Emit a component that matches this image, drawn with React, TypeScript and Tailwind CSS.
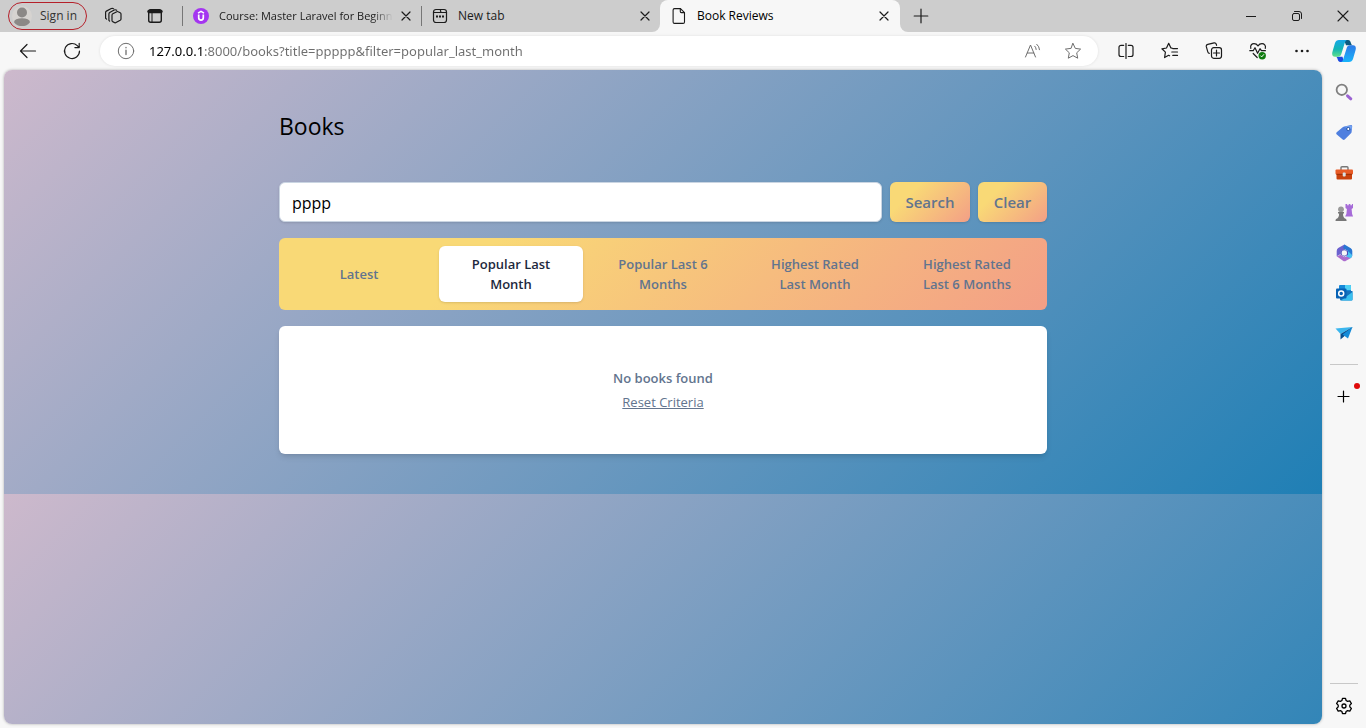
import type { ReactNode } from "react";

const filters = ["Latest", "Popular Last Month", "Popular Last 6 Months", "Highest Rated Last Month", "Highest Rated Last 6 Months"];

function Icon({ size = 18, sw = 1, className = "", children }: { size?: number; sw?: number; className?: string; children: ReactNode }) {
  return (
    <svg width={size} height={size} viewBox={`0 0 ${size} ${size}`} fill="none" stroke="currentColor" strokeWidth={sw} strokeLinecap="round" strokeLinejoin="round" className={`shrink-0 ${className}`} aria-hidden="true">
      {children}
    </svg>
  );
}

function IconButton({ label, className = "", children }: { label: string; className?: string; children: ReactNode }) {
  return (
    <button type="button" aria-label={label} className={`flex shrink-0 items-center justify-center ${className}`}>
      {children}
    </button>
  );
}

function CloseIcon() {
  return (
    <Icon size={10} sw={1.2}>
      <path d="M1 1l8 8M9 1L1 9" />
    </Icon>
  );
}

function TabStrip() {
  return (
    <header className="flex h-8 shrink-0 bg-[#f7f7f7] text-xs text-[#1b1b1b]">
      <div className="flex w-[660px] shrink-0 items-center rounded-br-lg bg-[#cdcdcd]">
        <button type="button" className="ml-2 flex h-7 w-[79px] items-center gap-2 rounded-full border border-[#b5202a] pl-[3px] text-[#333]">
          <svg width="20" height="20" viewBox="0 0 20 20" className="shrink-0" aria-hidden="true">
            <circle cx="10" cy="10" r="10" fill="#d6d3d0" />
            <circle cx="10" cy="6.500" r="5" fill="#8b8886" />
            <path d="M2 16.200a8 4 0 0 1 16 0A10 10 0 0 1 2 16.200z" fill="#8b8886" />
          </svg>
          <span className="whitespace-nowrap">Sign in</span>
        </button>
        <IconButton label="Workspaces" className="ml-[17px] w-[18px]">
          <Icon sw={1.200}>
            <path d="M8 8.200q0-1 .8-1.400l4-2.100q.7-.4 1.400 0l2 1q.8.4.8 1.200v5q0 .8-.8 1.300L12 15.600q-.6.400-1.200.1L8.700 14.600Q8 14.200 8 13.400z" />
            <path d="M5.600 14l-.7-.6V7q0-1 .8-1.500L10.200 3q.9-.5 1.900 0l.6.300" />
            <path d="M2.600 12.100l-1-.8V5.600q0-1 .8-1.500L7.300 1.500q.9-.4 1.800 0l.5.2" />
          </Icon>
        </IconButton>
        <IconButton label="Tab actions" className="ml-6 w-[18px]">
          <Icon sw={1.400}>
            <rect x="2.700" y="2.700" width="12.600" height="12.600" rx="2" />
            <path d="M3 4.500h12" strokeWidth="3.400" />
            <path d="M6 6v9" strokeWidth="1" />
          </Icon>
        </IconButton>
        <div className="ml-[18px] flex h-5 w-[239px] items-center border-l border-[#767676] pl-[10px]">
          <svg width="16" height="16" viewBox="0 0 16 16" className="shrink-0" aria-hidden="true">
            <circle cx="8" cy="8" r="8" fill="#a435f0" />
            <path d="M5 5.200L8 3.400l3 1.800" fill="none" stroke="#fff" strokeWidth="1.500" />
            <path d="M5.700 6.600v3.200a2.300 2.300 0 0 0 4.600 0V6.600" fill="none" stroke="#fff" strokeWidth="1.700" />
          </svg>
          <span className="ml-[10px] w-[174px] overflow-hidden text-[11px] leading-4 whitespace-nowrap [mask-image:linear-gradient(to_right,black_88%,transparent)]">Course: Master Laravel for Beginn</span>
          <IconButton label="Close tab" className="ml-[5px] w-4"><CloseIcon /></IconButton>
        </div>
        <div className="flex h-5 flex-1 items-center border-l border-[#767676] pl-[10px]">
          <Icon size={16} sw={1.200}>
            <rect x="1.500" y="1.500" width="13" height="13" rx="2.500" />
            <path d="M1.500 4.500h6.500l1-.0h5.500M8.500 1.500v1.500q0 1.500 1.500 1.500" />
            <path d="M4 8.500h2M7 8.500h2M10 8.500h2" strokeWidth="2" strokeLinecap="butt" />
          </Icon>
          <span className="ml-[10px] flex-1">New tab</span>
          <IconButton label="Close tab" className="mr-[7px] w-4"><CloseIcon /></IconButton>
        </div>
      </div>
      <div className="w-60 shrink-0 bg-[#cdcdcd]">
        <div className="flex h-full items-center rounded-t-lg bg-[#f7f7f7] pl-[11px]">
          <Icon size={16} sw={1.100}>
            <path d="M3.500.6H9.500L13.500 4.600V14a1.400 1.400 0 0 1-1.400 1.400H3.500A1.400 1.400 0 0 1 2.100 14V2A1.400 1.400 0 0 1 3.500.6z" />
            <path d="M9.300.8v2.800a1 1 0 0 0 1 1h3" />
          </Icon>
          <span className="ml-[10px] flex-1 text-black">Book Reviews</span>
          <IconButton label="Close tab" className="mr-2 w-4"><CloseIcon /></IconButton>
        </div>
      </div>
      <div className="flex flex-1 items-center rounded-bl-lg bg-[#cdcdcd]">
        <IconButton label="New tab" className="ml-[13px] w-4">
          <Icon size={16} sw={1.200}><path d="M8 1.200v13.600M1.200 8h13.600" /></Icon>
        </IconButton>
        <div className="flex-1" />
        <IconButton label="Minimise" className="h-8 w-[46px]">
          <Icon size={12}><path d="M1 6.500h10" strokeLinecap="butt" /></Icon>
        </IconButton>
        <IconButton label="Restore" className="h-8 w-[46px]">
          <Icon size={12}>
            <rect x="1.500" y="3.500" width="7" height="7" rx="1.500" />
            <path d="M3.500 1.500h4.500a2.500 2.500 0 0 1 2.500 2.500v4.500" />
          </Icon>
        </IconButton>
        <IconButton label="Close window" className="h-8 w-[46px]">
          <Icon size={12} sw={1.100}><path d="M1 1l10 10M11 1L1 11" /></Icon>
        </IconButton>
      </div>
    </header>
  );
}

function Toolbar() {
  return (
    <nav className="flex h-[38px] shrink-0 items-center pl-[18px] text-[#1b1b1b]">
      <IconButton label="Back" className="w-5">
        <Icon size={20} sw={1.200}><path d="M17.500 10h-15M9 3.500L2.500 10 9 16.500" /></Icon>
      </IconButton>
      <IconButton label="Refresh" className="ml-6 w-5">
        <Icon size={20} sw={1.200}><path d="M17.500 10a7.500 7.500 0 1 1-2.200-5.300L17 6.400M17.200 2.300v4.300h-4.300" /></Icon>
      </IconButton>
      <div className="ml-[18px] flex h-[30px] flex-1 items-center rounded-full bg-white pl-[17px] shadow-[0_0_3px_rgba(0,0,0,0.1)]">
        <Icon className="text-[#6e6e6e]">
          <circle cx="9" cy="9" r="7.700" />
          <path d="M9 8.200v4.300M9 5.500v.3" strokeWidth="1.300" />
        </Icon>
        <input
          aria-label="Address"
          defaultValue="127.0.0.1:8000/books?title=ppppp&filter=popular_last_month"
          className="ml-[14px] h-5 min-w-0 flex-1 bg-linear-to-r from-black from-[54px] to-[#6e6e6e] to-[54px] bg-clip-text font-['Noto_Sans',sans-serif] text-[13px] text-transparent caret-black outline-none"
        />
        <IconButton label="Read aloud" className="text-[#6e6e6e]">
          <Icon>
            <path d="M1.500 15L6.500 3l5 12M3.300 11h6.500" />
            <path d="M10.800 4.200a5 5 0 0 1 1.400 3.300M12.800 2.300a7.500 7.500 0 0 1 2.700 5.400" />
          </Icon>
        </IconButton>
        <IconButton label="Favourite" className="mr-4 ml-[22px] text-[#6e6e6e]">
          <Icon><path d="M9 1.500l2.300 4.900 5.300.7-3.900 3.700 1 5.400L9 13.600l-4.700 2.600 1-5.400L1.400 7.100l5.300-.7z" /></Icon>
        </IconButton>
      </div>
      <div className="ml-[19px] flex w-[205px] shrink-0 items-center gap-[26px]">
        <IconButton label="Split screen">
          <Icon sw={1.200}>
            <path d="M9 1.500v15" />
            <path d="M6.700 3.300H4a2 2 0 0 0-2 2v7.200a2 2 0 0 0 2 2h2.700M11.300 3.300H14a2 2 0 0 1 2 2v7.200a2 2 0 0 1-2 2h-2.700" />
          </Icon>
        </IconButton>
        <IconButton label="Favourites">
          <Icon sw={1.200}>
            <path d="M11 6.100l-1.100-.2L7.700 1.300 5.500 6l-4.600.8 3.500 3.300-.8 5.500 4-2.300 1 .5M11.800 6.600h4.700M10.800 10h5.700M11.800 13.400h4.700" />
          </Icon>
        </IconButton>
        <IconButton label="Collections">
          <Icon sw={1.200}>
            <rect x="6.500" y="5.700" width="10" height="10.600" rx="2.200" />
            <path d="M11.500 8v6M8.500 11h6M4.300 11.300a2 2 0 0 1-1.500-1.500L1.300 4.700a2 2 0 0 1 1.500-2.300l6.300-1.500a2 2 0 0 1 2.200 1.300l.3 1.100" />
          </Icon>
        </IconButton>
        <IconButton label="Browser essentials">
          <Icon sw={1.200}>
            <path d="M1.800 6.300C1 3 3 1.700 5 1.700c2 0 3.300 1.200 4 2.200.7-1 2-2.200 4-2.200s4.200 1.500 3.300 4.600M.8 8.700h3.400l1.800-3 2.600 5.600L11 6.700l1.400 2h4M4.200 11.500l4 4" />
            <circle cx="13.200" cy="13.700" r="3.700" fill="#107c10" stroke="none" />
            <path d="M11.700 13.900l1 1 2-2.300" stroke="#fff" strokeWidth="1" />
          </Icon>
        </IconButton>
        <IconButton label="More">
          <Icon>
            <g fill="currentColor" stroke="none"><circle cx="3.500" cy="9" r="1.300" /><circle cx="9" cy="9" r="1.300" /><circle cx="14.500" cy="9" r="1.300" /></g>
          </Icon>
        </IconButton>
      </div>
    </nav>
  );
}

function Sidebar() {
  return (
    <aside className="flex w-11 shrink-0 flex-col items-center">
      <IconButton label="Copilot" className="h-[38px]">
        <svg width="24" height="24" viewBox="0 0 24 24" aria-hidden="true">
          <defs>
            <linearGradient id="cpA" x1="0" y1="0" x2="0" y2="1"><stop offset="0" stopColor="#16a7e8" /><stop offset=".55" stopColor="#12b5b5" /><stop offset="1" stopColor="#5fe08a" /></linearGradient>
            <linearGradient id="cpB" x1="0" y1="0" x2="0" y2="1"><stop offset="0" stopColor="#2d7be8" /><stop offset="1" stopColor="#18b4fa" /></linearGradient>
          </defs>
          <path d="M12 1h4c2 0 2.500 1.500 3 3.200.4 1.300.8 2 2 2h-7z" fill="#0a5a80" />
          <path d="M12 23H8.500c-2 0-2.500-1.500-3-3.200-.4-1.300-.8-2-2-2h7z" fill="#1b4ae0" />
          <path d="M7 1h8c-1.500.5-2 2-2.500 3.800L9.300 15c-.6 1.800-1.600 2.700-3.300 2.700H3C.5 17.700-.3 15.500.4 13L3 4C3.700 2 5 1 7 1z" fill="url(#cpA)" />
          <path d="M17 23H9c1.500-.5 2-2 2.500-3.800L14.700 9c.6-1.800 1.600-2.700 3.300-2.700h3c2.500 0 3.300 2.200 2.600 4.700L21 20c-.7 2-2 3-4 3z" fill="url(#cpB)" />
        </svg>
      </IconButton>
      <div className="flex flex-col items-center gap-5 pt-[13px]">
        <IconButton label="Search sidebar" className="h-5">
          <svg width="20" height="20" viewBox="0 0 20 20" aria-hidden="true">
            <path d="M13.500 12.800l3.300 3" stroke="#9b63d2" strokeWidth="3" strokeLinecap="round" />
            <circle cx="7.800" cy="6.800" r="5.200" fill="none" stroke="#808080" strokeWidth="1.800" />
          </svg>
        </IconButton>
        <IconButton label="Shopping" className="h-5">
          <svg width="20" height="20" viewBox="0 0 20 20" aria-hidden="true">
            <path d="M10.500 3.500L17 2q1.300 0 1.200 1.200L17.600 9q-.1.700-.6 1.200l-6.300 6.400q-1 .9-2 0L2.500 11.300q-.8-1 .2-2l6-5q.8-.7 1.800-.8z" fill="#4f7fdf" />
            <path d="M10 3.700L17 2.500q1 .1.900 1l-.2 3z" fill="#75a3f1" />
            <circle cx="14.300" cy="6" r="1.600" fill="#fff" stroke="#2454a7" />
          </svg>
        </IconButton>
        <IconButton label="Tools" className="h-5">
          <svg width="20" height="20" viewBox="0 0 20 20" aria-hidden="true">
            <path d="M7 7V4.700q0-1 1-1h5q1 0 1 1V7" fill="none" stroke="#777" strokeWidth="1.400" />
            <rect x="1.500" y="6.500" width="17.500" height="5" rx="1" fill="#e85b26" />
            <path d="M2.500 11h15.500v4.500q0 1-1 1H3.500q-1 0-1-1z" fill="#c9410d" />
            <path d="M2.500 11.300h15.500" stroke="#9c2f07" />
            <rect x="8.700" y="9.500" width="3" height="4" rx="1" fill="#d8e1e5" />
          </svg>
        </IconButton>
        <IconButton label="Games" className="h-5">
          <svg width="20" height="20" viewBox="0 0 20 20" aria-hidden="true">
            <path d="M11.500 1h1.700v1.300h1.500V1h1.700v1.300h1.500V1H19v4l-1.400 1 .5 5 1 2.500h-8l1.300-2.500.5-5-1.400-1z" fill="#a66bd8" />
            <circle cx="7" cy="6.300" r="2.900" fill="#999" />
            <path d="M4 9h6v1.500H9c0 3 .7 4.500 3 5.500q.6.500.6 2H1.500q0-1.500.6-2c2.300-1 3-2.500 3-5.500H4z" fill="#777" />
          </svg>
        </IconButton>
        <IconButton label="Microsoft 365" className="h-5">
          <svg width="20" height="20" viewBox="0 0 20 20" aria-hidden="true">
            <path d="M10.500 1.500L4.200 5Q2.700 6 2.700 8v5.200l4-2.200V8.500l6-3.300z" fill="#6c62cf" />
            <path d="M10.500 1.500l6.300 3.700q1.500 1 1.500 2.800v4.500l-4.500-2.300V8L9 5z" fill="#2876d3" />
            <path d="M2.700 13.200L9 17.700q1.500 1 3 0l4.500-2.500q1.800-1 1.800-2.800l-4.500-2.200v2.500l-3.300 1.600-3.800-2.500z" fill="#ac6bce" />
            <path d="M12.500 13.500l1.300-5.500 4.500 4.200q0 2-1.800 3z" fill="#49c4f2" />
            <path d="M6.500 8.500l4-2.200 3.500 2v3.500l-3.500 2-4-2.300z" fill="#4a4bb8" />
            <circle cx="10.300" cy="10" r="2.700" fill="#f7f7f7" />
          </svg>
        </IconButton>
        <IconButton label="Outlook" className="h-5">
          <svg width="20" height="20" viewBox="0 0 20 20" aria-hidden="true">
            <rect x="5" y="2" width="12" height="13" rx="1" fill="#1689d8" />
            <path d="M11 2h5q1 0 1 1v4h-6z" fill="#50d2f5" />
            <path d="M6 8h12.500v8.500q0 1-1 1H7q-1 0-1-1z" fill="#1472bd" />
            <path d="M18.500 9v7.500q0 1-1 1H7z" fill="#39c0ef" />
            <rect x="2" y="5.500" width="10.500" height="10" rx="1" fill="#0762b5" />
            <circle cx="7.200" cy="10.500" r="2.500" fill="none" stroke="#fff" strokeWidth="1.500" />
          </svg>
        </IconButton>
        <IconButton label="Drop" className="h-5">
          <svg width="20" height="20" viewBox="0 0 20 20" aria-hidden="true">
            <path d="M1.500 5.500L18.500 4 6.500 11z" fill="#3bb6ee" />
            <path d="M18.500 4L6.500 11v5.500l3.500-3z" fill="#0a4e8c" />
            <path d="M18.500 4L8.500 11.500l5.500 4z" fill="#148bd8" />
          </svg>
        </IconButton>
      </div>
      <div className="mt-[21px] h-px w-7 bg-[#c8c8c8]" />
      <div className="relative mt-[22px]">
        <IconButton label="Customise" className="h-5">
          <Icon size={20} sw={1.200}><path d="M9.500 4v11M4 9.500h11" /></Icon>
        </IconButton>
        <span className="absolute -top-1 left-5 size-[6px] rounded-full bg-[#e00b0b]" />
      </div>
      <div className="mt-auto h-px w-7 bg-[#c8c8c8]" />
      <IconButton label="Settings" className="h-11">
        <Icon size={18} sw={1.300}>
          <path d="M7.500 1.300h3l.6 2.200 1.500.9 2.200-.6 1.600 2.700-1.600 1.600v1.800l1.600 1.600-1.600 2.700-2.200-.6-1.500.9-.6 2.200h-3l-.6-2.200-1.500-.9-2.200.6-1.600-2.700L3.200 9.900V8.100L1.600 6.500l1.600-2.700 2.200.6 1.500-.9z" />
          <circle cx="9" cy="9" r="2" />
        </Icon>
      </IconButton>
    </aside>
  );
}

function BooksPage() {
  return (
    <main className="mb-1 ml-1 flex-1 overflow-hidden rounded-lg bg-[linear-gradient(315deg,#1f7fb5_0%,#cdb9cc_100%)] bg-[length:100%_424px] bg-repeat-y shadow-[0_0_3px_rgba(0,0,0,0.3)]">
      <div className="mx-auto max-w-3xl py-10">
        <h1 className="mb-10 text-[23px] leading-8 text-black">Books</h1>
        <form className="mb-4 flex gap-2" onSubmit={(e) => e.preventDefault()}>
          <input aria-label="Search by title" defaultValue="pppp" className="h-10 min-w-0 flex-1 rounded-md border border-slate-300 bg-white px-3 pt-0.5 text-base text-black shadow-sm outline-none" />
          <button type="submit" className="h-10 w-20 rounded-md bg-[linear-gradient(315deg,#f39f86_0%,#f9d976_74%)] text-[15px] font-semibold text-slate-500 shadow-sm">Search</button>
          <button type="reset" className="h-10 w-[69px] rounded-md bg-[linear-gradient(315deg,#f39f86_0%,#f9d976_74%)] text-[15px] font-semibold text-slate-500 shadow-sm">Clear</button>
        </form>
        <div className="mb-4 grid grid-cols-5 gap-2 rounded-md bg-[linear-gradient(315deg,#f39f86_0%,#f9d976_74%)] p-2">
          {filters.map((name, i) => (
            <a key={name} href="#" className={`flex min-h-14 items-center justify-center rounded-md px-6 py-2 text-center text-[13px] leading-5 font-semibold ${i === 1 ? "bg-white text-slate-800 shadow-sm" : "text-slate-500"}`}>
              {name}
            </a>
          ))}
        </div>
        <div className="rounded-md bg-white py-10 text-center text-[13px] leading-6 text-slate-500 shadow-md">
          <p className="font-semibold">No books found</p>
          <a href="#" className="underline">Reset Criteria</a>
        </div>
      </div>
    </main>
  );
}

export default function App() {
  return (
    <div className="flex h-screen flex-col overflow-hidden bg-[#f7f7f7] font-['Open_Sans',sans-serif]">
      <TabStrip />
      <div className="flex min-h-0 flex-1">
        <div className="flex min-w-0 flex-1 flex-col">
          <Toolbar />
          <BooksPage />
        </div>
        <Sidebar />
      </div>
    </div>
  );
}
